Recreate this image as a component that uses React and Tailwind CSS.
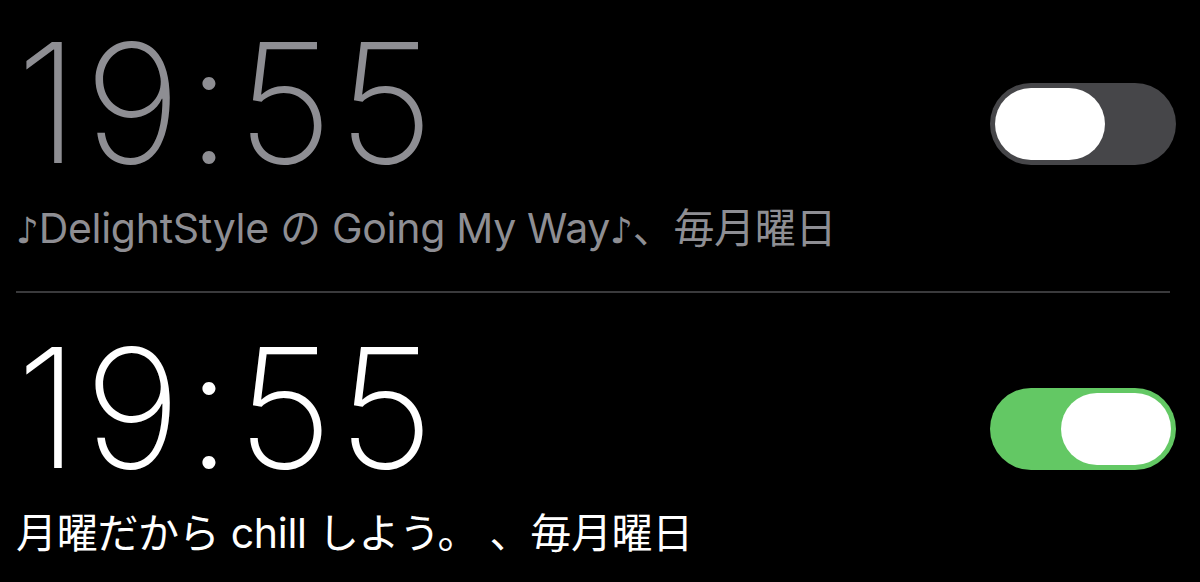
import React from 'react'

const Note = () => <span className="font-['DejaVu_Sans',sans-serif] text-[36px]">♪</span>

const Toggle = ({ on }) => (
    <div className={`mt-[50px] w-[186px] h-[82px] rounded-full p-[5px] flex shrink-0 ${on ? 'bg-[#63c864] justify-end' : 'bg-[#464649] justify-start'}`}>
        <div className="w-[110px] h-[72px] rounded-full bg-white" />
    </div>
)

const AlarmRow = ({ time, label, on, first }) => (
    <div className={`flex justify-between items-start pl-[16px] pr-[24px] ${first ? 'pt-[33px]' : 'pt-[45px]'}`}>
        <div className="flex flex-col">
            <div className={`text-[166px] leading-[140px] font-extralight tracking-[5px] font-['Inter',sans-serif] ${on ? 'text-white' : 'text-[#8e8e93]'}`}>
                {time}
            </div>
            <div className={`mt-[31px] text-[41px] leading-[48px] tracking-[-0.3px] whitespace-nowrap ${on ? 'text-white' : 'text-[#8e8e93]'}`}>
                {label}
            </div>
        </div>
        <Toggle on={on} />
    </div>
)

export default function App() {
    return (
        <div className="w-[1200px] h-[582px] bg-black overflow-hidden font-['Inter','Noto_Sans_CJK_JP',sans-serif]">
            <div className="h-[291px]">
                <AlarmRow
                    time="19:55"
                    label={<><Note />DelightStyle の Going My Way<Note />、毎月曜日</>}
                    on={false}
                    first
                />
            </div>
            <div className="ml-[16px] mr-[30px] h-[2px] bg-[#3a3a3c]" />
            <AlarmRow time="19:55" label="月曜だから chill しよう。 、毎月曜日" on />
        </div>
    )
}
